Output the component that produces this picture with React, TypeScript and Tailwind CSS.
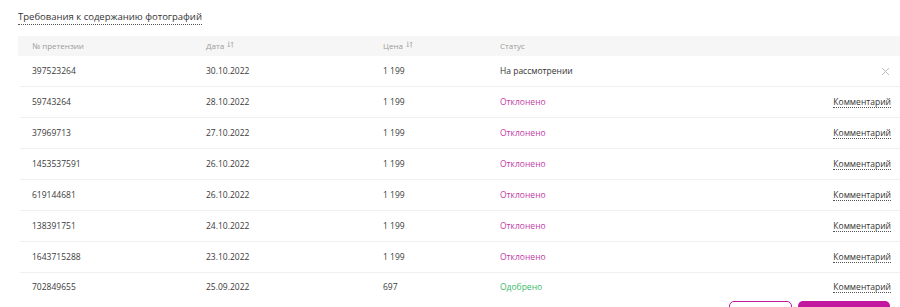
import React from 'react';

type Claim = {
  id: string;
  date: string;
  price: string;
  status: 'review' | 'rejected' | 'approved';
};

const claims: Claim[] = [
  { id: '397523264', date: '30.10.2022', price: '1 199', status: 'review' },
  { id: '59743264', date: '28.10.2022', price: '1 199', status: 'rejected' },
  { id: '37969713', date: '27.10.2022', price: '1 199', status: 'rejected' },
  { id: '1453537591', date: '26.10.2022', price: '1 199', status: 'rejected' },
  { id: '619144681', date: '26.10.2022', price: '1 199', status: 'rejected' },
  { id: '138391751', date: '24.10.2022', price: '1 199', status: 'rejected' },
  { id: '1643715288', date: '23.10.2022', price: '1 199', status: 'rejected' },
  { id: '702849655', date: '25.09.2022', price: '697', status: 'approved' },
];

const statusText = {
  review: 'На рассмотрении',
  rejected: 'Отклонено',
  approved: 'Одобрено',
};

const statusClass = {
  review: 'text-[#333]',
  rejected: 'text-[#c43aa6]',
  approved: 'text-[#3cb96b]',
};

// маленькая иконка сортировки ↓↑
function SortIcon() {
  return (
    <svg width="7" height="7" viewBox="0 0 7 7" className="ml-[3px] mt-[-3px] text-[#aaa]" fill="none" stroke="currentColor" strokeWidth="0.8">
      <path d="M1.8 0.5v5.5M0.6 4.8l1.2 1.2 1.2-1.2" />
      <path d="M5.2 6.5V1M4 2.2l1.2-1.2 1.2 1.2" />
    </svg>
  );
}

export default function App() {
  return (
    <div className="w-[900px] h-[307px] overflow-hidden bg-white font-['Open_Sans',sans-serif] text-[#3a3a3a]">
      <div className="pl-[18px] pt-[2px]">
        <span className="text-[9.5px] leading-[14px] border-b border-dotted border-[#555] pb-[1px] text-[#333]">
          Требования к содержанию фотографий
        </span>
      </div>

      <div className="ml-[18px] mt-[10px]">
        {/* Шапка таблицы */}
        <div className="flex items-center h-[20px] bg-[#f6f6f6] pl-[14px] text-[8px] text-[#9a9a9a]">
          <div className="w-[174px]">№ претензии</div>
          <div className="w-[177px] flex items-center">Дата<SortIcon /></div>
          <div className="w-[117px] flex items-center">Цена<SortIcon /></div>
          <div className="flex-1">Статус</div>
        </div>

        {/* Строки */}
        {claims.map((c, i) => (
          <div
            key={c.id}
            className={
              i === claims.length - 1
                ? 'flex items-center h-[29px] ml-[2px] pl-[12px] pr-[9px] text-[8.5px]'
                : 'flex items-center h-[31px] ml-[2px] pl-[12px] pr-[9px] text-[8.5px] border-b border-[#f0f0f0]'
            }
          >
            <div className="w-[174px]">{c.id}</div>
            <div className="w-[177px]">{c.date}</div>
            <div className="w-[117px]">{c.price}</div>
            <div className={'flex-1 ' + statusClass[c.status]}>{statusText[c.status]}</div>
            <div>
              {c.status === 'review' ? (
                <svg width="9" height="9" viewBox="0 0 9 9" className="mr-[1px]" stroke="#b5b5b5" strokeWidth="0.9">
                  <path d="M1 1l7 7M8 1L1 8" />
                </svg>
              ) : (
                <span className="border-b border-dotted border-[#555] text-[#333]">Комментарий</span>
              )}
            </div>
          </div>
        ))}

        <div className="flex justify-end gap-[6px] pr-[10px] mt-[-1px]">
          <button className="w-[63px] h-[20px] rounded-[5px] border border-[#c1189f] bg-white"></button>
          <button className="w-[92px] h-[20px] rounded-[5px] bg-[#c1189f]"></button>
        </div>
      </div>
    </div>
  );
}
